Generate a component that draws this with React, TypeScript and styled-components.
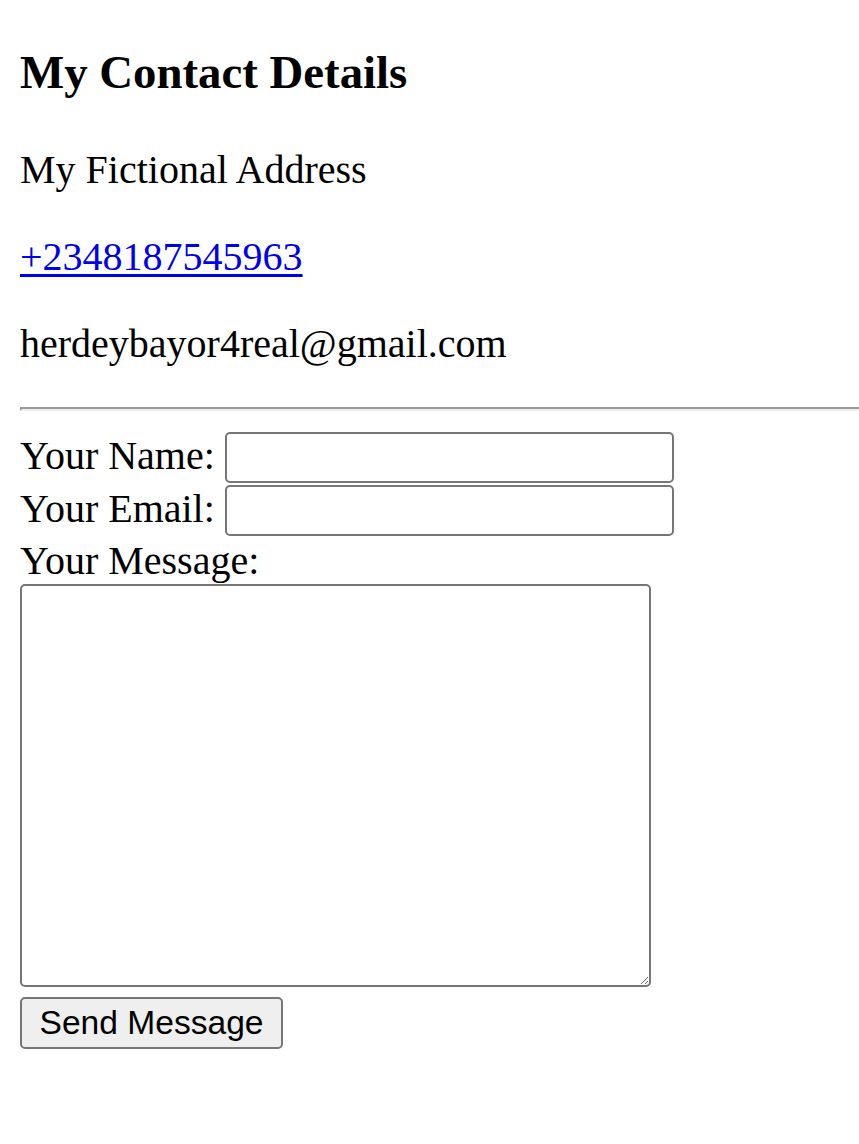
import styled, { createGlobalStyle } from 'styled-components';

const GlobalStyle = createGlobalStyle`
  html, body {
    background: #ffffff;
  }
  body {
    margin: 0 0 20px 20px;
    font-family: "Liberation Serif", "Times New Roman", serif;
    font-size: 40px;
    color: #000000;
  }
`;

const Heading = styled.h3`
  font-size: 46.8px;
  font-weight: bold;
  margin: 44.8px 0 46.8px;
`;

const Detail = styled.p`
  margin: 40px 0;
`;

const PhoneLink = styled.a`
  color: #0000ee;
  text-decoration: underline;
  text-decoration-thickness: 3px;
  text-underline-offset: 4px;
`;

const Divider = styled.hr`
  height: 0;
  margin: 20px 0;
  border-style: solid;
  border-width: 2.5px 0 2.5px 2.5px;
  border-color: #9a9a9a #eeeeee #eeeeee #9a9a9a;
`;

const ContactForm = styled.form`
  margin: 0;
`;

const Label = styled.label`
  font-size: 40px;
`;

const TextInput = styled.input`
  box-sizing: border-box;
  width: 449px;
  height: 51px;
  margin: 1px 0;
  padding: 2.5px 5px;
  border: 2.5px solid #767676;
  border-radius: 5px;
  font-family: "Liberation Sans", Arial, sans-serif;
  font-size: 33.3px;
  background: #ffffff;
`;

const MessageBox = styled.textarea`
  box-sizing: border-box;
  width: 631px;
  height: 403px;
  margin: 0;
  padding: 5px;
  border: 2.5px solid #767676;
  border-radius: 5px;
  font-family: "Liberation Mono", monospace;
  font-size: 33.3px;
  background: #ffffff;
`;

const SendButton = styled.button`
  box-sizing: border-box;
  height: 52px;
  margin: 0;
  padding: 2.5px 17.5px;
  border: 2.5px solid #767676;
  border-radius: 5px;
  background: #efefef;
  color: #000000;
  font-family: "Liberation Sans", Arial, sans-serif;
  font-size: 33.6px;
`;

export default function App(): JSX.Element {
  return (
    <>
      <GlobalStyle />
      <Heading>My Contact Details</Heading>
      <Detail>My Fictional Address</Detail>
      <Detail>
        <PhoneLink href="tel:+2348187545963">+2348187545963</PhoneLink>
      </Detail>
      <Detail>herdeybayor4real@gmail.com</Detail>
      <Divider />
      <ContactForm onSubmit={(e) => e.preventDefault()}>
        <Label htmlFor="name">Your Name:</Label> <TextInput id="name" type="text" />
        <br />
        <Label htmlFor="email">Your Email:</Label> <TextInput id="email" type="email" />
        <br />
        <Label htmlFor="message">Your Message:</Label>
        <br />
        <MessageBox id="message" />
        <br />
        <SendButton type="submit">Send Message</SendButton>
      </ContactForm>
    </>
  );
}
